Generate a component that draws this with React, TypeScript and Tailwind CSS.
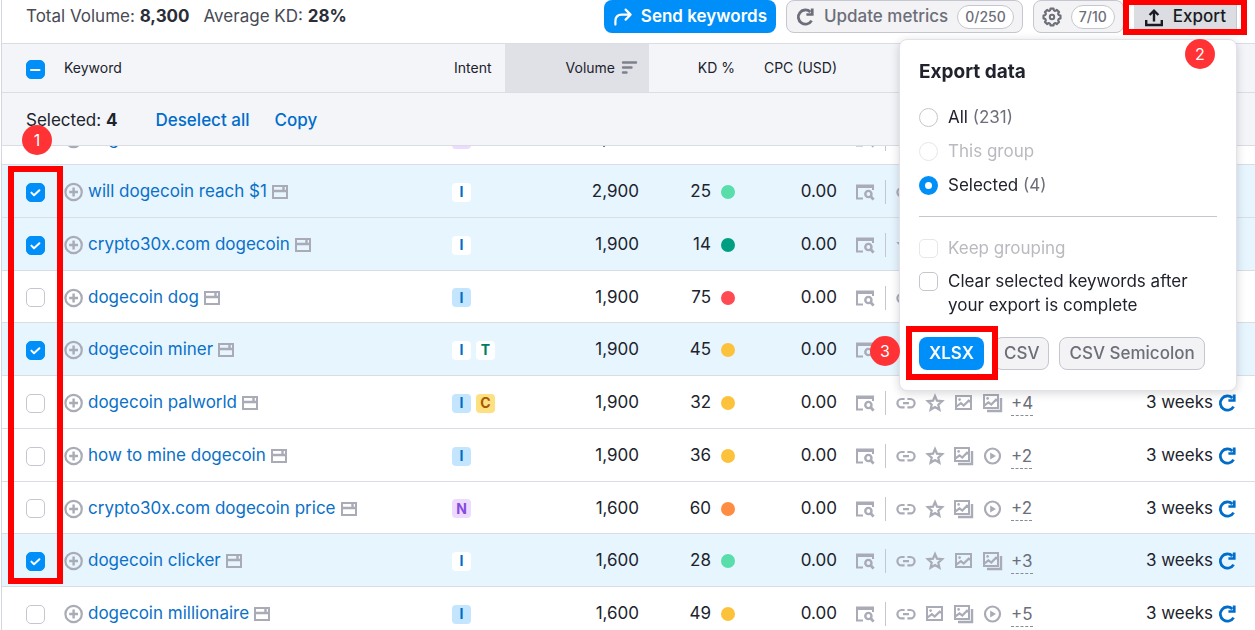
import { useLayoutEffect, useRef, useState } from 'react'
import type { ReactNode } from 'react'
import clsx from 'clsx'

type Intent = 'I' | 'T' | 'C' | 'N'
type Feature = 'link' | 'star' | 'image' | 'images' | 'play'

interface Keyword {
  name: string
  intents: Intent[]
  volume: string
  kd: number
  dot: string
  features: Feature[]
  more?: string
  updated?: string
}

const ROW_SCROLL = 34

const keywords: Keyword[] = [
  { name: 'dogecoin value', intents: ['N'], volume: '2,900', kd: 52, dot: 'bg-[#ff8c43]', features: ['link', 'star'] },
  { name: 'will dogecoin reach $1', intents: ['I'], volume: '2,900', kd: 25, dot: 'bg-[#59ddaa]', features: ['link', 'star'] },
  { name: 'crypto30x.com dogecoin', intents: ['I'], volume: '1,900', kd: 14, dot: 'bg-[#009f81]', features: ['star', 'image'] },
  { name: 'dogecoin dog', intents: ['I'], volume: '1,900', kd: 75, dot: 'bg-[#ff4953]', features: ['link', 'star'] },
  { name: 'dogecoin miner', intents: ['I', 'T'], volume: '1,900', kd: 45, dot: 'bg-[#fdc23c]', features: ['link', 'star'] },
  { name: 'dogecoin palworld', intents: ['I', 'C'], volume: '1,900', kd: 32, dot: 'bg-[#fdc23c]', features: ['link', 'star', 'image', 'images'], more: '+4', updated: '3 weeks' },
  { name: 'how to mine dogecoin', intents: ['I'], volume: '1,900', kd: 36, dot: 'bg-[#fdc23c]', features: ['link', 'star', 'images', 'play'], more: '+2', updated: '3 weeks' },
  { name: 'crypto30x.com dogecoin price', intents: ['N'], volume: '1,600', kd: 60, dot: 'bg-[#ff8c43]', features: ['link', 'star', 'images', 'play'], more: '+2', updated: '3 weeks' },
  { name: 'dogecoin clicker', intents: ['I'], volume: '1,600', kd: 28, dot: 'bg-[#59ddaa]', features: ['link', 'star', 'image', 'images'], more: '+3', updated: '3 weeks' },
  { name: 'dogecoin millionaire', intents: ['I'], volume: '1,600', kd: 49, dot: 'bg-[#fdc23c]', features: ['link', 'image', 'images', 'play'], more: '+5', updated: '3 weeks' },
]

const intentColors: Record<Intent, { text: string; bg: string }> = {
  I: { text: 'text-[#006dca]', bg: 'bg-[#c4e5fe]' },
  T: { text: 'text-[#007c65]', bg: 'bg-[#9ef2c9]' },
  C: { text: 'text-[#a75800]', bg: 'bg-[#fce081]' },
  N: { text: 'text-[#8649e1]', bg: 'bg-[#eddbff]' },
}

// eight rounded teeth around the centre of a 20x20 box
const gearPath =
  Array.from({ length: 8 }, (_, i) => {
    const at = (deg: number, r: number) => {
      const a = ((i * 45 + deg) * Math.PI) / 180
      return `${(10 + r * Math.cos(a)).toFixed(2)} ${(10 + r * Math.sin(a)).toFixed(2)}`
    }
    return `${i === 0 ? 'M' : 'L'}${at(-10, 8.6)}L${at(10, 8.6)}Q${at(14, 6.8)} ${at(22.5, 6.8)}Q${at(31, 6.8)} ${at(35, 8.6)}`
  }).join('') + 'z'

function Icon({ children, className }: { children: ReactNode; className?: string }) {
  return (
    <svg
      viewBox="0 0 20 20"
      className={clsx('size-5 shrink-0', className)}
      fill="none"
      stroke="currentColor"
      strokeWidth="2"
      aria-hidden="true"
    >
      {children}
    </svg>
  )
}

function FeatureIcon({ type }: { type: Feature }) {
  switch (type) {
    case 'link':
      return (
        <Icon>
          <path d="M8.6 6H5.6a4 4 0 0 0 0 8.4h3M11.4 6h3a4 4 0 0 1 0 8.4h-3M7 10.2h6" strokeWidth="2.2" />
        </Icon>
      )
    case 'star':
      return (
        <Icon>
          <path d="m10 3 2 4.6 5.2.5-3.9 3.5 1.1 5.1-4.4-2.7-4.4 2.7 1.1-5.1-3.9-3.5 5.2-.5z" strokeWidth="2.2" />
        </Icon>
      )
    case 'image':
      return (
        <Icon>
          <path d="M2 3h15v13H2z" />
          <path d="m2.500 13.500 4.400-3.400 2.800 2.400 5-4.800 2.400 1.400" strokeWidth="2.200" />
          <circle cx="5.600" cy="6.600" r="1.300" fill="currentColor" stroke="none" />
        </Icon>
      )
    case 'images':
      return (
        <Icon>
          <path d="M1 2h14v13H1z" />
          <path d="M18 5v13H4" strokeWidth="2.400" />
          <path d="m1.500 12.400 4-3 2.800 2.200 4.700-4.800 2 1.400" strokeWidth="2.200" />
          <circle cx="4.600" cy="5.400" r="1.300" fill="currentColor" stroke="none" />
        </Icon>
      )
    case 'play':
      return (
        <Icon>
          <circle cx="9.500" cy="10" r="7.500" strokeWidth="2.200" />
          <path d="M7.200 6.400v7.200l5.800-3.600z" fill="currentColor" stroke="none" />
        </Icon>
      )
  }
}

function ReloadIcon({ className }: { className?: string }) {
  return (
    <Icon className={className}>
      <path d="M16.600 13.600A7.100 7.100 0 1 1 15.400 5" strokeWidth="2.800" />
      <path d="M18.600 1.600v7.200h-7.200V6.200h4.400V1.600z" fill="currentColor" stroke="none" />
    </Icon>
  )
}

function Checkbox({
  label,
  id,
  checked,
  mixed,
  disabled,
  onChange,
}: {
  label?: string
  id?: string
  checked: boolean
  mixed?: boolean
  disabled?: boolean
  onChange: () => void
}) {
  return (
    <span className="relative block size-[19px] shrink-0">
      <input
        type="checkbox"
        id={id}
        aria-label={label}
        checked={checked}
        disabled={disabled}
        onChange={onChange}
        className="block size-[19px] appearance-none rounded-[5px] border border-[#c4c7cf] bg-white checked:border-[#008ff8] checked:bg-[#008ff8] disabled:border-[#e6e7ea]"
      />
      {checked && (
        <svg viewBox="0 0 19 19" className="pointer-events-none absolute inset-0" fill="none" stroke="#fff" strokeWidth="2" strokeLinecap="round" strokeLinejoin="round">
          <path d={mixed ? 'M5 10h8.500' : 'm5.400 9.600 2.600 2.600 5.400-5'} />
        </svg>
      )}
    </span>
  )
}

function Marker({ children, className }: { children: ReactNode; className: string }) {
  return (
    <span className={clsx('absolute z-40 flex size-[30px] items-center justify-center rounded-full bg-[#ff3336] text-base text-white', className)}>
      {children}
    </span>
  )
}

function ExportPopup() {
  const [scope, setScope] = useState('selected')
  const [clear, setClear] = useState(false)

  const options = [
    { id: 'all', label: 'All', count: '(231)', disabled: false },
    { id: 'group', label: 'This group', count: '', disabled: true },
    { id: 'selected', label: 'Selected', count: '(4)', disabled: false },
  ]

  return (
    <div className="absolute top-[39px] right-[18px] z-30 w-[338px] rounded-lg border border-[#e0e1e9] bg-white px-[19px] py-5 shadow-[0_2px_10px_rgba(25,27,35,0.18)]">
      <h2 className="mb-[21px] text-[19px] leading-6 font-bold">Export data</h2>
      <div className="flex flex-col gap-2.5">
        {options.map((o) => (
          <label key={o.id} className={clsx('flex items-center gap-2.5 leading-6', o.disabled && 'text-[#b9babf]')}>
            <input
              type="radio"
              name="scope"
              checked={scope === o.id}
              disabled={o.disabled}
              onChange={() => setScope(o.id)}
              className="size-[19px] appearance-none rounded-full border border-[#c4c7cf] checked:border-[6px] checked:border-[#008ff8] disabled:border-[#e6e7ea]"
            />
            <span>
              {o.label} <span className="text-[#6c6e79]">{o.count}</span>
            </span>
          </label>
        ))}
      </div>
      <hr className="my-[19px] border-[#c4c7cf]" />
      <div className="flex flex-col gap-[9px] leading-6">
        <div className="flex items-center gap-2.5 text-[#b9babf]">
          <Checkbox id="keep-grouping" checked={false} disabled onChange={() => {}} />
          <label htmlFor="keep-grouping">Keep grouping</label>
        </div>
        <div className="flex items-start gap-2.5">
          <span className="pt-[3px]">
            <Checkbox id="clear-selected" checked={clear} onChange={() => setClear(!clear)} />
          </span>
          <label htmlFor="clear-selected" className="w-[250px]">
            Clear selected keywords after your export is complete
          </label>
        </div>
      </div>
      <div className="mt-5 flex gap-2.5 font-medium text-[#6c6e79]">
        <button className="h-[33px] rounded-lg bg-[#008ff8] px-2.5 font-semibold text-white">XLSX</button>
        <button className="h-[33px] rounded-lg border border-[#c4c7cf] bg-[#f3f3f5] px-[9px]">CSV</button>
        <button className="h-[33px] rounded-lg border border-[#c4c7cf] bg-[#f3f3f5] px-[9px] whitespace-nowrap">CSV Semicolon</button>
      </div>
      <span className="pointer-events-none absolute top-[286px] left-1.5 h-[54px] w-[92px] border-6 border-[#ff0000]" />
      <Marker className="top-[296px] -left-[30px]">3</Marker>
    </div>
  )
}

function Toolbar() {
  const secondary = 'flex h-[33px] items-center gap-[9px] rounded-lg border border-[#c4c7cf] bg-[#f3f3f5] px-2 font-medium text-[#6c6e79]'
  const pill = 'rounded-full border border-[#c4c7cf] bg-white px-[7px] text-sm leading-[22px]'

  return (
    <header className="relative flex h-[43px] shrink-0 items-start pr-[18px] pl-6">
      <p className="mt-1 flex gap-3.5 leading-6 text-[#484a54]">
        <span>
          Total Volume: <b className="font-bold text-[#2b2e38]">8,300</b>
        </span>
        <span>
          Average KD: <b className="font-bold text-[#2b2e38]">28%</b>
        </span>
      </p>
      <div className="ml-auto flex gap-2.5">
        <button className="flex h-[33px] items-center gap-2 rounded-lg bg-[#008ff8] px-[9px] font-semibold text-white">
          <Icon>
            <path d="M2.400 17.600v-3.400c0-4.200 2.400-6.600 6.400-6.600h8.400M12.600 2.600l5 5-5 5" strokeWidth="2.200" strokeLinecap="round" strokeLinejoin="round" />
          </Icon>
          Send keywords
        </button>
        <button className={secondary}>
          <ReloadIcon />
          Update metrics
          <span className={pill}>0/250</span>
        </button>
        <div className="flex gap-2.5">
          <button aria-label="Settings" className={secondary}>
            <Icon>
              <path d={gearPath} strokeWidth="2.200" strokeLinejoin="round" />
              <circle cx="10" cy="10" r="2.200" />
            </Icon>
            <span className={pill}>7/10</span>
          </button>
          <button className="flex h-[33px] items-center gap-[9px] border-r border-[#c4c7cf] bg-[#dcdde2] px-2.5 font-medium text-[#191b23]">
            <Icon>
              <path d="M2.200 13v5h15.600v-5M10 14.500V4M5.600 8 10 3.600 14.400 8" strokeWidth="2.400" />
            </Icon>
            Export
          </button>
        </div>
      </div>
      <span className="pointer-events-none absolute -top-px right-2 z-40 h-9 w-[124px] border-6 border-[#ff0000]" />
      <Marker className="top-[39px] right-10">2</Marker>
      <ExportPopup />
    </header>
  )
}

function KeywordRow({ item, selected, onToggle }: { item: Keyword; selected: boolean; onToggle: () => void }) {
  return (
    <tr
      className={clsx(
        'h-[53px] nth-[4n]:h-[52px] [&>td]:border-b [&>td]:border-[#dbdde4] [&>td]:p-0 [&>td]:pt-0.5',
        selected ? 'bg-[#e7f5ff]' : 'bg-white',
      )}
    >
      <td>
        <div className="pl-6">
          <Checkbox label={item.name} checked={selected} onChange={onToggle} />
        </div>
      </td>
      <td>
        <div className="flex items-center text-[#a9abb6]">
          <Icon className="mr-1">
            <circle cx="9.600" cy="10" r="8.200" strokeWidth="2.200" />
            <path d="M9.600 5.600v8.800M5.200 10h8.800" strokeWidth="2.400" />
          </Icon>
          <a href="#" className="text-[#0a70c8]">
            {item.name}
          </a>
          <Icon className="ml-[3px]">
            <path d="M3 4h14v12H3z" />
            <path d="M3 9h14M13.500 4v4" strokeWidth="2.400" />
          </Icon>
        </div>
      </td>
      <td>
        <div className="flex gap-[5px]">
          {item.intents.map((intent) => (
            <span
              key={intent}
              className={clsx(
                'flex size-[19px] items-center justify-center rounded text-sm font-bold',
                intentColors[intent].text,
                selected ? 'bg-white' : intentColors[intent].bg,
              )}
            >
              {intent}
            </span>
          ))}
        </div>
      </td>
      <td className="text-right">
        <div className="pr-2.5">{item.volume}</div>
      </td>
      <td>
        <div className="flex items-center justify-end gap-2.5 pr-2.5">
          {item.kd}
          <span className={clsx('size-3.5 rounded-full', item.dot)} />
        </div>
      </td>
      <td className="text-right">
        <div className="pr-2.5">0.00</div>
      </td>
      <td>
        <div className="flex items-center pl-2 text-[#a9abb6]">
          <Icon>
            <path d="M1 2.600h18v5.400h-2V6H3v9.600h5v2H1z" fill="currentColor" stroke="none" />
            <circle cx="13.400" cy="12" r="3.100" strokeWidth="2.400" />
            <path d="m15.400 14 3.200 3.600" strokeWidth="2.800" />
          </Icon>
          <span className="mx-2.5 h-6 w-px bg-[#c4c7cf]" />
          <div className="flex gap-[9px]">
            {item.features.map((f) => (
              <FeatureIcon key={f} type={f} />
            ))}
          </div>
          {item.more && (
            <span className="ml-2 border-b border-dashed border-[#898d9a] leading-6 text-[#6c6e79]">{item.more}</span>
          )}
        </div>
      </td>
      <td>
        {item.updated && (
          <div className="flex items-center justify-end gap-1 pr-[18px]">
            {item.updated}
            <button aria-label="Refresh metrics" className="text-[#006dca]">
              <ReloadIcon />
            </button>
          </div>
        )}
      </td>
    </tr>
  )
}

export default function App() {
  const scroller = useRef<HTMLDivElement>(null)
  const [selected, setSelected] = useState<string[]>([
    'will dogecoin reach $1',
    'crypto30x.com dogecoin',
    'dogecoin miner',
    'dogecoin clicker',
  ])

  useLayoutEffect(() => {
    if (scroller.current) scroller.current.scrollTop = ROW_SCROLL
  }, [])

  const toggle = (name: string) => {
    setSelected((list) => (list.includes(name) ? list.filter((n) => n !== name) : [...list, name]))
  }

  return (
    <div className="relative h-screen overflow-hidden bg-white pl-px font-['Inter',sans-serif] text-[17px] text-[#20232c]">
      <div className="flex h-full flex-col border-l border-[#d5d7df]">
        <Toolbar />
        <div ref={scroller} className="min-h-0 flex-1 overflow-hidden">
          <table className="w-full table-fixed border-separate border-spacing-0">
            <colgroup>
              <col className="w-[62px]" />
              <col />
              <col className="w-[53px]" />
              <col className="w-36" />
              <col className="w-24" />
              <col className="w-[102px]" />
              <col className="w-[224px]" />
              <col className="w-[184px]" />
            </colgroup>
            <thead className="sticky top-0 z-10">
              <tr className="h-[50px] bg-[#f4f5f9] text-left text-sm [&>th]:border-y [&>th]:border-[#dbdde4] [&>th]:p-0 [&>th]:font-normal">
                <th>
                  <div className="pt-0.5 pl-6">
                    <Checkbox label="Select all" checked={selected.length > 0} mixed onChange={() => setSelected([])} />
                  </div>
                </th>
                <th>Keyword</th>
                <th>
                  <div className="pl-0.5">Intent</div>
                </th>
                <th className="bg-[#e0e1e7]">
                  <div className="flex items-center justify-end gap-1 pr-2.5">
                    Volume
                    <Icon className="text-[#7d818c]">
                      <path d="M4 4.500h13M4 9.500h8.500M4 14.500h3.500" strokeWidth="2.400" strokeLinecap="round" />
                    </Icon>
                  </div>
                </th>
                <th>
                  <div className="pr-2.5 text-right">KD %</div>
                </th>
                <th>
                  <div className="pr-2.5 text-right whitespace-nowrap">CPC (USD)</div>
                </th>
                <th />
                <th />
              </tr>
              <tr className="h-[53px] bg-[#f4f5f9]">
                <td colSpan={8} className="border-b border-[#dbdde4] p-0">
                  <div className="flex items-center pt-0.5 pl-6 leading-6">
                    <span>
                      Selected: <b className="font-bold">{selected.length}</b>
                    </span>
                    <button className="ml-[38px] font-medium text-[#006dca]" onClick={() => setSelected([])}>
                      Deselect all
                    </button>
                    <button className="ml-[25px] font-medium text-[#006dca]">Copy</button>
                  </div>
                </td>
              </tr>
            </thead>
            <tbody>
              {keywords.map((item) => (
                <KeywordRow key={item.name} item={item} selected={selected.includes(item.name)} onToggle={() => toggle(item.name)} />
              ))}
            </tbody>
          </table>
        </div>
      </div>
      <span className="pointer-events-none absolute top-[166px] left-2 z-20 h-[418px] w-[55px] border-6 border-[#ff0000]" />
      <Marker className="top-[125px] left-[22px]">1</Marker>
    </div>
  )
}
